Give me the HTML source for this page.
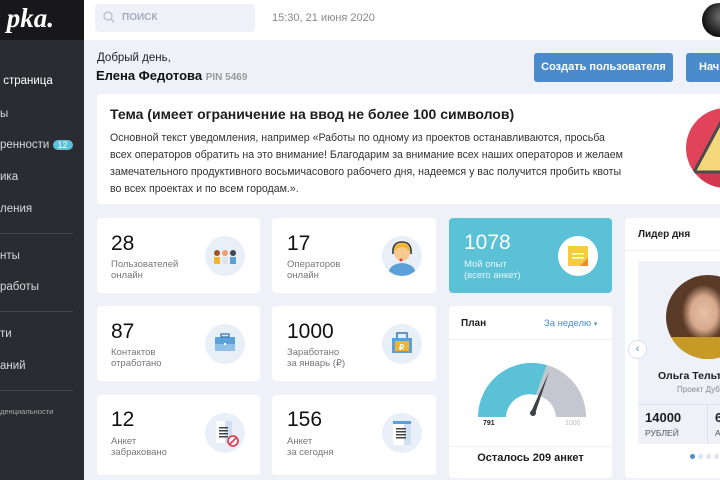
<!DOCTYPE html>
<html><head><meta charset="utf-8"><style>
*{margin:0;padding:0;box-sizing:border-box}
html,body{width:720px;height:480px;overflow:hidden}
body{background:#eef2f8;font-family:"Liberation Sans","Noto Sans CJK SC",sans-serif;color:#1d1d1f;position:relative}
.a{position:absolute;white-space:nowrap}
.side{left:0;top:0;width:84px;height:480px;background:#2b2c31}
.logo{left:0;top:0;width:84px;height:40px;background:#18181b;color:#fff;font:italic bold 27px "Liberation Serif",serif;line-height:36px;overflow:hidden}
.nav{color:#d8d8dc;font-size:11.5px;left:0}
.hr{left:0;width:73px;height:1px;background:#45464c}
.top{left:84px;top:0;width:636px;height:40px;background:#fff}
.card{background:#fff;border-radius:4px}
.num{font-size:21px;color:#111}
.lbl{font-size:9.5px;color:#777;line-height:11px}
.ic{width:40px;height:40px;border-radius:50%;background:#e9eff7}
</style></head><body>
<div class="a side"></div>
<div class="a logo">&nbsp;pka.</div>
<div class="a nav" style="top:75px;color:#fff">&nbsp;страница</div>
<div class="a nav" style="top:108px">ы</div>
<div class="a nav" style="top:139px">ренности <span style="background:#5bc1d7;color:#fff;border-radius:7px;padding:0 5px;font-size:9px">12</span></div>
<div class="a nav" style="top:171px">ика</div>
<div class="a nav" style="top:203px">ления</div>
<div class="a hr" style="top:233px"></div>
<div class="a nav" style="top:250px">нты</div>
<div class="a nav" style="top:281px">работы</div>
<div class="a hr" style="top:311px"></div>
<div class="a nav" style="top:328px">ти</div>
<div class="a nav" style="top:360px">аний</div>
<div class="a hr" style="top:390px"></div>
<div class="a nav" style="top:407px;font-size:7.5px;color:#aaa">денциальности</div>

<div class="a top"></div>
<div class="a" style="left:95px;top:4px;width:160px;height:28px;background:#eef2f8;border-radius:4px"></div>
<svg class="a" style="left:103px;top:11px" width="12" height="12"><circle cx="5" cy="5" r="4" fill="none" stroke="#b8bec8" stroke-width="1.3"/><line x1="8" y1="8" x2="11" y2="11" stroke="#b8bec8" stroke-width="1.3"/></svg>
<div class="a" style="left:122px;top:12px;font-size:10px;font-weight:bold;color:#a6adb8">ПОИСК</div>
<div class="a" style="left:272px;top:12px;font-size:11px;color:#888">15:30, 21 июня 2020</div>
<div class="a" style="left:702px;top:3px;width:34px;height:34px;border-radius:50%;background:radial-gradient(circle at 60% 40%,#777,#111 70%)"></div>

<div class="a" style="left:97px;top:52px;font-size:11.5px;color:#222">Добрый день,</div>
<div class="a" style="left:96px;top:68px;font-size:13px;font-weight:bold;color:#111">Елена Федотова <span style="font-size:10px;color:#999">PIN 5469</span></div>
<div class="a" style="left:534px;top:53px;width:139px;height:29px;background:#4a8ccb;border-radius:3px;color:#fff;font-size:11px;font-weight:bold;text-align:center;line-height:29px">Создать пользователя</div>
<div class="a" style="left:686px;top:53px;width:34px;height:29px;background:#4a8ccb;border-radius:3px 0 0 3px;color:#fff;font-size:11px;font-weight:bold;line-height:29px;padding-left:13px;overflow:hidden">Нач</div>

<div class="a card" style="left:97px;top:94px;width:623px;height:110px;border-radius:4px 0 0 4px"></div>
<div class="a" style="left:110px;top:106px;font-size:14px;font-weight:bold">Тема (имеет ограничение на ввод не более 100 символов)</div>
<div class="a" style="left:110px;top:130px;font-size:10.6px;line-height:17px;color:#333">Основной текст уведомления, например «Работы по одному из проектов останавливаются, просьба<br>всех операторов обратить на это внимание! Благодарим за внимание всех наших операторов и желаем<br>замечательного продуктивного восьмичасового рабочего дня, надеемся у вас получится пробить квоты<br>во всех проектах и по всем городам.».</div>
<div class="a" style="left:686px;top:108px;width:34px;height:80px;overflow:hidden"><div style="width:80px;height:80px;border-radius:50%;background:#e0435a;overflow:hidden"><svg width="80" height="80"><polygon points="40,0 80,80 10,80" fill="#c63149" opacity=".6"/><polygon points="36,12 8,64 64,64" fill="#f6d87c" stroke="#4b4b4b" stroke-width="3" stroke-linejoin="round"/></svg></div></div>

<div class="a card" style="left:97px;top:218px;width:163px;height:75px"></div>
<div class="a num" style="left:111px;top:232px">28</div>
<div class="a lbl" style="left:111px;top:259px">Пользователей<br>онлайн</div>
<div class="a ic" style="left:205px;top:236px"><svg width="40" height="40"><circle cx="12" cy="17" r="3" fill="#a0522d"/><rect x="9" y="21" width="6" height="7" fill="#f2b530"/><circle cx="20" cy="17" r="3" fill="#f0a070"/><rect x="17" y="21" width="6" height="7" fill="#dfe4ea"/><circle cx="28" cy="17" r="3" fill="#3d4750"/><rect x="25" y="21" width="6" height="7" fill="#5ba0d8"/></svg></div>

<div class="a card" style="left:272px;top:218px;width:164px;height:75px"></div>
<div class="a num" style="left:287px;top:232px">17</div>
<div class="a lbl" style="left:287px;top:259px">Операторов<br>онлайн</div>
<div class="a ic" style="left:382px;top:236px;overflow:hidden"><svg width="40" height="40"><path d="M6 40 Q6 28 20 27 Q34 28 34 40Z" fill="#5ba0d8"/><circle cx="20" cy="17" r="8" fill="#f6c98f"/><path d="M12 16 Q12 7 20 7 Q28 7 28 16 Q24 11 20 11 Q16 11 12 16Z" fill="#f2b530"/><path d="M11 18 Q10 6 20 6 Q30 6 29 18" fill="none" stroke="#333" stroke-width="1.6"/><circle cx="19" cy="24" r="1.5" fill="#e04040"/></svg></div>

<div class="a" style="left:449px;top:218px;width:163px;height:75px;background:#5bc1d7;border-radius:4px"></div>
<div class="a" style="left:464px;top:231px;font-size:21px;color:#fff">1078</div>
<div class="a" style="left:464px;top:259px;font-size:9.5px;line-height:11px;color:#e4f6fa">Мой опыт<br>(всего анкет)</div>
<div class="a" style="left:558px;top:236px;width:40px;height:40px;border-radius:50%;background:#fff"><svg width="40" height="40"><rect x="10" y="10" width="20" height="20" fill="#f5cc3a"/><polygon points="22,30 30,22 30,30" fill="#f08a2a"/><rect x="14" y="17" width="12" height="1.5" fill="#fff"/><rect x="14" y="21" width="12" height="1.5" fill="#fff"/></svg></div>

<div class="a card" style="left:97px;top:306px;width:163px;height:75px"></div>
<div class="a num" style="left:111px;top:320px">87</div>
<div class="a lbl" style="left:111px;top:347px">Контактов<br>отработано</div>
<div class="a ic" style="left:205px;top:324px"><svg width="40" height="40"><rect x="10" y="13" width="20" height="14" rx="1" fill="#5ba0d8"/><rect x="10" y="20" width="20" height="7" fill="#8ec0ea"/><rect x="16" y="10" width="8" height="3" fill="none" stroke="#3c78b5" stroke-width="1.3"/><rect x="19" y="19" width="2" height="2" fill="#fff"/></svg></div>

<div class="a card" style="left:272px;top:306px;width:164px;height:75px"></div>
<div class="a num" style="left:287px;top:320px">1000</div>
<div class="a lbl" style="left:287px;top:347px">Заработано<br>за январь (₽)</div>
<div class="a ic" style="left:382px;top:324px"><svg width="40" height="40"><rect x="10" y="14" width="20" height="15" fill="#5ba0d8"/><rect x="13" y="17" width="14" height="10" fill="#f2b530"/><path d="M15 14 V9 H25 V14" fill="none" stroke="#3c78b5" stroke-width="1.5"/><text x="17" y="26" font-size="8" font-weight="bold" fill="#fff" font-family="Liberation Sans">₽</text></svg></div>

<div class="a card" style="left:449px;top:306px;width:163px;height:172px"></div>
<div class="a" style="left:461px;top:318px;font-size:10px;font-weight:bold">План</div>
<div class="a" style="left:544px;top:318px;font-size:9.5px;color:#4a8ccb">За неделю <span style="font-size:7px">▾</span></div>
<div class="a" style="left:449px;top:339px;width:163px;height:1px;background:#eceff3"></div>
<svg class="a" style="left:476px;top:360px" width="112" height="60"><path d="M2 57 A54 54 0 0 1 71 5 L60 35 A24 24 0 0 0 30 57Z" fill="#5bc1d7"/><path d="M71 5 A54 54 0 0 1 110 57 L80 57 A24 24 0 0 0 60 35Z" fill="#c4c7cf"/><polygon points="55,52 73,12 59,54" fill="#3d4045"/><circle cx="57" cy="53" r="3" fill="#3d4045"/></svg>
<div class="a" style="left:483px;top:420px;font-size:7px;font-weight:bold">791</div>
<div class="a" style="left:565px;top:420px;font-size:7px;color:#bbb">1000</div>
<div class="a" style="left:449px;top:446px;width:163px;height:1px;background:#eceff3"></div>
<div class="a" style="left:449px;top:452px;width:163px;text-align:center;font-size:11px;font-weight:bold">Осталось 209 анкет</div>

<div class="a card" style="left:97px;top:395px;width:163px;height:80px"></div>
<div class="a num" style="left:111px;top:408px">12</div>
<div class="a lbl" style="left:111px;top:436px">Анкет<br>забраковано</div>
<div class="a ic" style="left:205px;top:413px"><svg width="40" height="40"><rect x="11" y="8" width="16" height="22" fill="#fff"/><rect x="20" y="8" width="7" height="22" fill="#cfe0f2"/><rect x="14" y="14" width="9" height="1.5" fill="#444"/><rect x="14" y="17" width="9" height="1.5" fill="#444"/><rect x="14" y="20" width="9" height="1.5" fill="#444"/><rect x="14" y="23" width="9" height="1.5" fill="#444"/><circle cx="28" cy="28" r="5" fill="#fff" stroke="#e0435a" stroke-width="1.8"/><line x1="25" y1="31" x2="31" y2="25" stroke="#e0435a" stroke-width="1.8"/></svg></div>

<div class="a card" style="left:272px;top:395px;width:164px;height:80px"></div>
<div class="a num" style="left:287px;top:408px">156</div>
<div class="a lbl" style="left:287px;top:436px">Анкет<br>за сегодня</div>
<div class="a ic" style="left:382px;top:413px"><svg width="40" height="40"><rect x="11" y="9" width="18" height="23" fill="#fff"/><rect x="22" y="9" width="7" height="23" fill="#cfe0f2"/><rect x="11" y="8" width="18" height="3" fill="#5ba0d8"/><rect x="14" y="15" width="10" height="1.5" fill="#444"/><rect x="14" y="18" width="10" height="1.5" fill="#444"/><rect x="14" y="21" width="10" height="1.5" fill="#444"/><rect x="14" y="24" width="10" height="1.5" fill="#444"/></svg></div>

<div class="a" style="left:625px;top:218px;width:95px;height:260px;overflow:hidden">
<div class="a card" style="left:0;top:0;width:110px;height:260px"></div>
<div class="a" style="left:13px;top:11px;font-size:10px;font-weight:bold">Лидер дня</div>
<div class="a" style="left:0;top:32px;width:95px;height:1px;background:#eceff3"></div>
<div class="a" style="left:13px;top:43px;width:90px;height:183px;background:#eef2f8;border-radius:3px"></div>
<div class="a" style="left:41px;top:57px;width:84px;height:84px;border-radius:50%;background:radial-gradient(ellipse 22px 28px at 45% 45%,#e6c0a6 0,#d8a98c 60%,#5a3b28 100%),#4c7183;background-repeat:no-repeat;overflow:hidden"><div style="position:absolute;left:0;top:62px;width:84px;height:30px;background:#c79a25"></div></div>
<div class="a" style="left:3px;top:122px;width:19px;height:19px;border-radius:50%;background:#fff;border:1px solid #d8e3ef;color:#4a8ccb;font-size:11px;text-align:center;line-height:17px">‹</div>
<div class="a" style="left:33px;top:152px;font-size:10.5px;font-weight:bold">Ольга Тельт</div>
<div class="a" style="left:52px;top:167px;font-size:8px;color:#888">Проект Дуб</div>
<div class="a" style="left:13px;top:186px;width:90px;height:1px;background:#dde3ea"></div>
<div class="a" style="left:82px;top:186px;width:1px;height:40px;background:#dde3ea"></div>
<div class="a" style="left:20px;top:192px;font-size:13px;font-weight:bold">14000</div>
<div class="a" style="left:20px;top:210px;font-size:8.5px;color:#555">РУБЛЕЙ</div>
<div class="a" style="left:90px;top:192px;font-size:13px;font-weight:bold">6</div>
<div class="a" style="left:90px;top:210px;font-size:8.5px;color:#555">А</div>
<div class="a" style="left:65px;top:236px;width:5px;height:5px;border-radius:50%;background:#4a8ccb"></div>
<div class="a" style="left:73px;top:236px;width:5px;height:5px;border-radius:50%;background:#dde3ea"></div>
<div class="a" style="left:81px;top:236px;width:5px;height:5px;border-radius:50%;background:#dde3ea"></div>
<div class="a" style="left:89px;top:236px;width:5px;height:5px;border-radius:50%;background:#dde3ea"></div>
</div>
</body></html>
